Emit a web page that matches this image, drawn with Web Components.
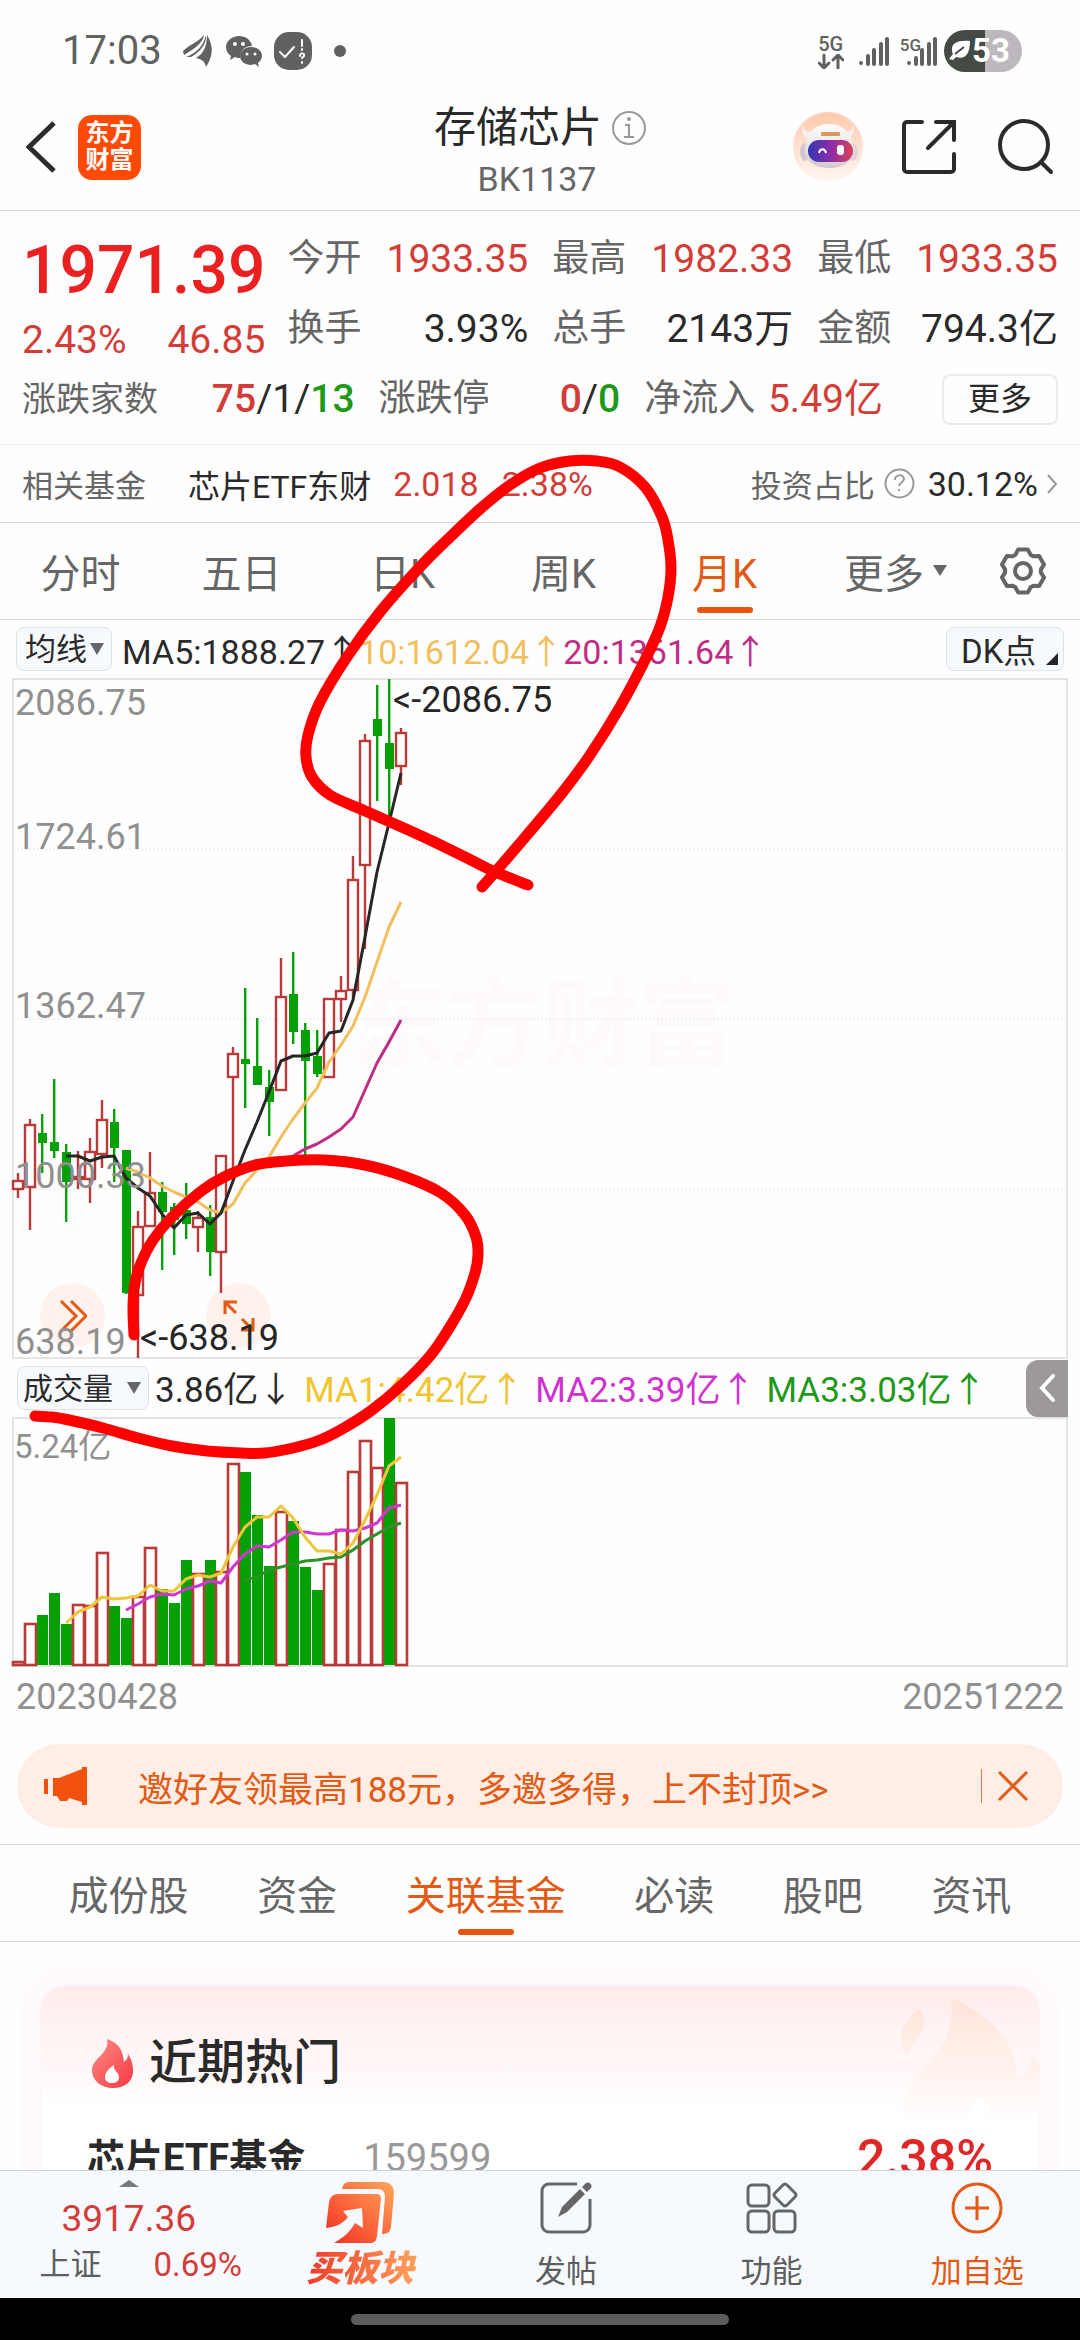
<!DOCTYPE html>
<html lang="zh-CN">
<head>
<meta charset="utf-8">
<meta name="viewport" content="width=device-width, initial-scale=1">
<title>存储芯片 BK1137</title>
<style>
  html, body { margin: 0; height: 100%; background: #fefefe; }
  body {
    font-family: Roboto, "Noto Sans CJK SC", sans-serif;
    color: #2a2a2a;
    --muted: #666666;
    --faint: #909090;
    --up: #d43c38;
    --down: #1f991a;
    --accent: #e25a14;
    --rule: #d6d6d8;
  }
</style>
</head>
<body>
<quote-app></quote-app>

<script>
const BASE = `
  :host { display: block; box-sizing: border-box; }
  *, *::before, *::after { box-sizing: border-box; }
  button, select { font: inherit; color: inherit; background: none; border: 0; padding: 0; margin: 0; appearance: none; cursor: pointer; }
  svg { display: block; flex: none; }
  p, h1, h2, dl, dd, dt { margin: 0; font-weight: 400; }
  a { color: inherit; text-decoration: none; }
  .up { color: var(--up); }
  .down { color: var(--down); }
`;

function define(name, css, html, after) {
  const tpl = document.createElement('template');
  tpl.innerHTML = `<style>${BASE}${css}</style>${html}`;
  customElements.define(name, class extends HTMLElement {
    constructor() {
      super();
      this.attachShadow({ mode: 'open' }).appendChild(tpl.content.cloneNode(true));
      if (after) after(this.shadowRoot);
    }
  });
}

/* Smooth path through a list of points (Catmull-Rom to Bezier). */
function smooth(pts) {
  let d = `M${pts[0][0]} ${pts[0][1]}`;
  for (let i = 0; i < pts.length - 1; i++) {
    const a = pts[i - 1] || pts[i], b = pts[i], c = pts[i + 1], e = pts[i + 2] || c;
    d += `C${b[0] + (c[0] - a[0]) / 6} ${b[1] + (c[1] - a[1]) / 6} ${c[0] - (e[0] - b[0]) / 6} ${c[1] - (e[1] - b[1]) / 6} ${c[0]} ${c[1]}`;
  }
  return d;
}

/* ---------- status bar ---------- */
define('status-bar', `
  :host { display: flex; align-items: center; height: 84px; padding: 18px 58px 0 62px; color: #5f625f; }
  time { font-size: 40px; line-height: 48px; margin-right: 20px; }
  .icons { display: flex; align-items: center; gap: 12px; flex: 1; }
  .net { display: flex; flex-direction: column; align-items: center; font-size: 20px; line-height: 20px; font-weight: 500; margin-right: 15px; }
  .sig { display: flex; align-items: flex-start; font-size: 17px; line-height: 18px; font-weight: 500; margin: 0 7px 0 11px; }
  .sig svg { margin-left: -14px; }
  .bat { display: flex; align-items: center; width: 78px; height: 42px; padding-left: 4px; border-radius: 21px; background: linear-gradient(90deg, #454a45 52%, #bdb8bd 52%); color: #fff; font-size: 33px; line-height: 42px; font-weight: 700; }
`, `
  <time>17:03</time>
  <span class="icons">
    <svg width="32" height="34" viewBox="0 0 32 34" fill="#5f625f"><path d="M1 17C8 10 15 9 22 1c-1 8-10 14-20 20z"/><path d="M4 23c10-4 17-10 20-22 1 9-6 17-15 22z"/><path d="M14 24c7-4 11-11 11-23 6 10 7 20-1 32-1-6-5-8-10-9z"/></svg>
    <svg width="36" height="32" viewBox="0 0 36 32"><path fill="#5f625f" d="M13 1C6 1 0 6 0 12c0 4 2 7 5 9l-1 4 5-3c2 1 4 1 5 1 0-8 5-12 12-12C25 5 20 1 13 1z"/><path fill="#5f625f" d="M25 12c-6 0-11 4-11 9s5 9 11 9l4-1 4 3-1-4c2-2 4-4 4-7 0-5-5-9-11-9z"/><g fill="#fefefe"><circle cx="9" cy="9" r="2"/><circle cx="17" cy="9" r="2"/><circle cx="21" cy="19" r="1.500"/><circle cx="29" cy="19" r="1.500"/></g></svg>
    <svg width="38" height="38" viewBox="0 0 38 38"><rect width="38" height="38" rx="15" fill="#5f625f"/><g fill="none" stroke="#fff" stroke-width="2" stroke-linecap="round"><path d="M6 20l5 5 9-10M28 8v6M28 17v1M26 24c0-4 5-3 4 0l-2 2M28 30v1"/></g></svg>
    <svg width="38" height="14" viewBox="0 0 38 14"><circle cx="16" cy="7" r="6" fill="#5f625f"/></svg>
  </span>
  <span class="net">5G<svg width="26" height="15" viewBox="0 0 26 15" fill="none" stroke="#5f625f" stroke-width="3" stroke-linecap="round" stroke-linejoin="round"><path d="M6 1v12M1 9l5 5 5-5M20 14V2M15 6l5-5 5 5"/></svg></span>
  <svg width="30" height="30" viewBox="0 0 30 30" stroke="#5f625f" stroke-width="4" stroke-linecap="round"><path d="M2 27v0M9 20v8M15 14v14M22 8v20M28 3v25"/></svg>
  <span class="sig">5G<svg width="30" height="30" viewBox="0 0 30 30" stroke="#5f625f" stroke-width="4" stroke-linecap="round"><path d="M2 27v0M9 22v6M15 14v14M22 8v20M28 3v25"/></svg></span>
  <span class="bat"><svg width="24" height="22" viewBox="0 0 24 22"><path fill="#fff" d="M22 1C10 0 4 3 4 9c0 2 0 3 1 5l-4 5 4 1 3-3c9 3 14-3 14-16z"/><path d="M7 14l9-7" stroke="#454a45" stroke-width="2"/></svg>53</span>
`);

/* ---------- page header ---------- */
define('page-header', `
  :host { display: grid; grid-template-columns: 1fr auto 1fr; align-items: center; height: 127px; padding: 0 26px; border-bottom: 1px solid var(--rule); }
  .left { display: flex; align-items: center; gap: 20px; }
  .logo { display: grid; place-content: center; width: 63px; height: 65px; border-radius: 14px; background: #ff4a06; color: #fff; font-size: 24px; line-height: 27px; font-weight: 700; text-align: center; }
  .mid { text-align: center; padding-top: 12px; }
  h1 { display: flex; align-items: center; gap: 10px; font-size: 42px; line-height: 52px; }
  .mid p { font-size: 34px; line-height: 50px; color: var(--muted); padding-right: 6px; }
  .right { display: flex; align-items: center; justify-content: flex-end; gap: 39px; }
  .right button:last-child { margin-left: 3px; }
`, `
  <div class="left">
    <button aria-label="返回"><svg width="32" height="52" viewBox="0 0 32 52" fill="none" stroke="#2b2b2b" stroke-width="5"><path d="M28 2L3 26l25 24"/></svg></button>
    <a class="logo" href="#">东方<br>财富</a>
  </div>
  <div class="mid">
    <h1>存储芯片<svg width="34" height="34" viewBox="0 0 34 34" fill="none" stroke="#999" stroke-width="2"><circle cx="17" cy="17" r="16"/><path d="M13 14h4v12M12 26h10" /><circle cx="17" cy="8" r="1" fill="#999"/></svg></h1>
    <p>BK1137</p>
  </div>
  <div class="right">
    <button aria-label="助手"><svg width="70" height="70" viewBox="0 0 70 70">
      <defs>
        <linearGradient id="av" x1="0" y1="0" x2="0" y2="1"><stop offset="0" stop-color="#ffc9ab"/><stop offset="1" stop-color="#fff7f3"/></linearGradient>
        <linearGradient id="vis" x1="0" y1="0" x2="1" y2="0"><stop offset="0" stop-color="#3436b4"/><stop offset=".5" stop-color="#8a2ea8"/><stop offset="1" stop-color="#dc4058"/></linearGradient>
        <linearGradient id="hd" x1="0" y1="0" x2="0" y2="1"><stop offset="0" stop-color="#fff"/><stop offset="1" stop-color="#d2c9cd"/></linearGradient>
      </defs>
      <circle cx="35" cy="35" r="35" fill="url(#av)"/>
      <path d="M9 14c0 6 1 9 4 12l6-5c-5-1-8-3-10-7zM61 14c0 6-1 9-4 12l-6-5c5-1 8-3 10-7z" fill="#f6eef0"/>
      <ellipse cx="12" cy="40" rx="5" ry="9" fill="#cfc8ce"/><ellipse cx="60" cy="40" rx="5" ry="9" fill="#ded4d8"/>
      <path d="M36 12c16 0 24 12 25 26 0 12-12 18-25 18S12 50 12 38c0-14 8-26 24-26z" fill="url(#hd)"/>
      <rect x="28" y="20" width="19" height="4" rx="1" fill="#d99a5c"/>
      <rect x="15" y="28" width="45" height="22" rx="11" fill="url(#vis)"/>
      <path d="M26 41c1-5 6-5 7 0" fill="none" stroke="#fff" stroke-width="2"/><rect x="44" y="33" width="7" height="10" rx="3" fill="#fff"/>
    </svg></button>
    <button aria-label="分享"><svg width="54" height="54" viewBox="0 0 54 54" fill="none" stroke="#2b2b2b" stroke-width="4" stroke-linecap="round"><path d="M20 2H5a3 3 0 0 0-3 3v44a3 3 0 0 0 3 3h44a3 3 0 0 0 3-3V34M34 2h18v18M51 3L26 28"/></svg></button>
    <button aria-label="搜索"><svg width="56" height="56" viewBox="0 0 56 56" fill="none" stroke="#2b2b2b" stroke-width="4" stroke-linecap="round"><circle cx="26" cy="26" r="24"/><path d="M43 43l10 10"/></svg></button>
  </div>
`);

/* ---------- quote figures ---------- */
define('quote-item', `
  :host { display: flex; justify-content: space-between; align-items: center; font-size: 39px; line-height: 70px; white-space: nowrap; }
  .k { font-size: 37px; color: var(--muted); }
  :host([small]) .k { font-size: 34px; }
`, `<span class="k"><slot name="k"></slot></span><span><slot></slot></span>`);

define('quote-panel', `
  :host { padding: 13px 22px 10px; border-bottom: 1px solid #eeeeee; }
  .top { display: grid; grid-template-columns: auto 1fr; column-gap: 22px; }
  .price { font-size: 66px; line-height: 94px; font-weight: 500; color: #eb2020; white-space: nowrap; }
  .chg { display: flex; justify-content: space-between; font-size: 39px; line-height: 44px; }
  .grid { display: grid; grid-template-columns: repeat(3, 1fr); column-gap: 24px; }
  .row { display: grid; grid-template-columns: 333fr 242fr 239fr auto; column-gap: 24px; align-items: center; }
  b { font-weight: 500; }
  .more { margin-left: 35px; width: 116px; height: 51px; border: 2px solid #ececee; border-radius: 8px; font-size: 32px; line-height: 46px; }
`, `
  <div class="top">
    <div>
      <p class="price">1971.39</p>
      <p class="chg up"><span>2.43%</span><span>46.85</span></p>
    </div>
    <div class="grid">
      <quote-item><span slot="k">今开</span><span class="up">1933.35</span></quote-item>
      <quote-item><span slot="k">最高</span><span class="up">1982.33</span></quote-item>
      <quote-item><span slot="k">最低</span><span class="up">1933.35</span></quote-item>
      <quote-item><span slot="k">换手</span>3.93%</quote-item>
      <quote-item><span slot="k">总手</span>2143万</quote-item>
      <quote-item><span slot="k">金额</span>794.3亿</quote-item>
    </div>
  </div>
  <div class="row">
    <quote-item small><span slot="k">涨跌家数</span><b class="up">75</b>/1/<b class="down">13</b></quote-item>
    <quote-item><span slot="k">涨跌停</span><b class="up">0</b>/<b class="down">0</b></quote-item>
    <quote-item><span slot="k">净流入</span><span class="up">5.49亿</span></quote-item>
    <button class="more">更多</button>
  </div>
`);

/* ---------- related fund ---------- */
define('fund-strip', `
  :host { display: flex; align-items: center; height: 78px; padding: 0 22px; border-bottom: 1px solid var(--rule); font-size: 32px; white-space: nowrap; }
  .k { color: var(--muted); font-size: 31px; }
  .name { margin-left: 42px; margin-right: 22px; }
  .n { font-size: 34px; margin-right: 23px; }
  a { display: flex; align-items: center; margin-left: auto; gap: 9px; }
  a .v { font-size: 34px; margin-left: 4px; }
`, `
  <span class="k">相关基金</span><span class="name">芯片ETF东财</span>
  <span class="n up">2.018</span><span class="n up">2.38%</span>
  <a href="#"><span class="k">投资占比</span>
    <svg width="31" height="31" viewBox="0 0 31 31" fill="none" stroke="#999" stroke-width="2"><circle cx="15.500" cy="15.500" r="14"/><path d="M11 12c0-6 9-6 9-1 0 3-5 4-5 7M15 21v2"/></svg>
    <span class="v">30.12%</span>
    <svg width="11" height="20" viewBox="0 0 11 20" fill="none" stroke="#999" stroke-width="2"><path d="M1 1l8 9-8 9"/></svg></a>
`);

/* ---------- period tabs ---------- */
define('period-tabs', `
  :host { display: grid; grid-template-columns: repeat(6, 161fr) 114fr; height: 97px; border-bottom: 1px solid var(--rule); color: var(--muted); font-size: 40px; }
  button { position: relative; display: flex; align-items: center; justify-content: center; white-space: nowrap; }
  .on { color: var(--accent); }
  .on::after { content: ""; position: absolute; left: calc(50% - 28px); bottom: 6px; width: 56px; height: 6px; border-radius: 3px; background: #e9540d; }
  .more { padding-left: 20px; gap: 9px; }
`, `
  <button>分时</button><button>五日</button><button>日K</button><button>周K</button><button class="on">月K</button>
  <button class="more">更多<svg width="14" height="12" viewBox="0 0 14 12"><path d="M0 0h14L7 11z" fill="#666"/></svg></button>
  <button class="gear" aria-label="设置"><svg width="50" height="50" viewBox="-25 -25 50 50" fill="none" stroke="#666" stroke-width="4" stroke-linejoin="round"><path/><circle r="8"/></svg></button>
`, root => {
  let d = '';
  for (let i = 0; i < 6; i++) {
    [[-25, 18], [-13, 22], [13, 22], [25, 18]].forEach(([a, r]) => {
      const t = (i * 60 - 90 + a) * Math.PI / 180;
      d += (d ? 'L' : 'M') + (r * Math.cos(t)).toFixed(1) + ' ' + (r * Math.sin(t)).toFixed(1);
    });
  }
  root.querySelector('.gear path').setAttribute('d', d + 'Z');
});

/* ---------- K-line chart ---------- */
/* [rising, high, body top, body bottom, low, volume top] */
const BARS = [
  [1,1173,1181,1189,1198,1662],[1,1119,1125,1187,1230,1624],[0,1114,1133,1143,1173,1615],[0,1079,1142,1151,1158,1593],
  [0,1144,1152,1182,1222,1624],[1,1151,1177,1179,1189,1605],[1,1138,1152,1179,1203,1606],[1,1100,1120,1154,1168,1553],
  [0,1109,1122,1148,1182,1606],[0,1150,1150,1293,1294,1618],[1,1211,1227,1295,1358,1597],[1,1152,1193,1226,1227,1548],
  [0,1182,1192,1212,1270,1589],[0,1203,1207,1220,1255,1603],[0,1183,1210,1224,1239,1560],[1,1211,1218,1227,1252,1574],
  [0,1205,1217,1252,1276,1560],[1,1156,1156,1252,1293,1572],[1,1047,1054,1077,1170,1464],[0,988,1059,1064,1108,1472],
  [0,1018,1066,1085,1085,1515],[0,1070,1087,1102,1136,1566],[1,958,997,1090,1091,1512],[0,952,994,1032,1044,1521],
  [0,1023,1030,1061,1157,1567],[0,1030,1056,1074,1077,1590],[1,999,999,1077,1077,1564],[1,976,991,999,1022,1530],
  [1,856,880,990,997,1472],[1,734,741,865,949,1441],[0,685,719,736,801,1468],[0,679,743,769,817,1418],[1,728,733,766,785,1483]
];
const VOL_UP = { 30: 1 };
const K_LINES = [
  ['#f3bf5c', 9, [1168,1172,1178,1186,1192,1197,1202,1210,1213,1204,1183,1170,1157,1137,1119,1103,1088,1062,1045,1026,997,962,927,902]],
  ['#c02b84', 22, [1162,1156,1149,1144,1137,1129,1117,1090,1063,1042,1020]],
  ['#262626', 4, [1156,1156,1161,1157,1156,1178,1188,1196,1214,1228,1215,1213,1224,1213,1181,1150,1122,1092,1061,1056,1056,1053,1033,1031,1000,937,872,823,773]]
];
const V_LINES = [
  ['#2d9128', 19, [1580,1577,1570,1567,1564,1561,1560,1558,1557,1550,1541,1534,1527,1523]],
  ['#cf38cf', 9, [1610,1604,1597,1594,1595,1589,1586,1581,1583,1567,1554,1546,1547,1540,1532,1532,1534,1534,1530,1531,1528,1523,1508,1505]],
  ['#edc63a', 4, [1623,1612,1607,1597,1599,1598,1596,1585,1591,1591,1579,1575,1577,1573,1547,1527,1517,1517,1506,1518,1537,1551,1551,1554,1543,1520,1495,1466,1457]]
];
const cx = i => 18 + 12 * i - (i > 16 ? 1 : 0);
const lines = set => set.map(([c, s, ys]) =>
  `<polyline fill="none" stroke="${c}" stroke-width="3" stroke-linejoin="round" points="${ys.map((y, k) => cx(s + k) + ',' + y).join(' ')}"/>`).join('');

function candles() {
  return BARS.map(([up, h, t, b, l], i) => {
    const x = cx(i);
    return up
      ? `<g fill="none" stroke="#b93a38" stroke-width="2.400"><path d="M${x} ${h}V${t}M${x} ${b}V${l}"/><rect x="${x - 5}" y="${t}" width="10" height="${b - t}"/></g>`
      : `<g fill="#04a004"><rect x="${x - 1}" y="${h}" width="2.400" height="${l - h}"/><rect x="${x - 4}" y="${t}" width="9" height="${b - t}"/></g>`;
  }).join('');
}
function volumes() {
  return BARS.map(([up, , , , , v], i) => {
    const x = cx(i);
    return (up || VOL_UP[i])
      ? `<rect x="${x - 5}" y="${v}" width="11" height="${1665 - v}" fill="#fefefe" stroke="#b93a38" stroke-width="2.600"/>`
      : `<rect x="${x - 5}" y="${v}" width="11" height="${1665 - v}" fill="#04a004"/>`;
  }).join('');
}

define('k-chart', `
  .legend { display: flex; align-items: center; height: 58px; padding: 0 16px; font-size: 34px; white-space: nowrap; }
  .pick { display: flex; align-items: center; height: 44px; border: 1px solid #e0e2e6; border-radius: 8px; background: #f6faff; }
  .ma label.pick { width: 96px; padding-left: 8px; gap: 3px; font-size: 31px; }
  .ma .txt { margin-left: 10px; display: flex; }
  .dk { position: relative; margin-left: auto; width: 118px; padding-left: 14px; font-size: 33px; }
  .dk svg { position: absolute; right: 5px; bottom: 5px; }
  .k10 { color: #f3bf5c; } .k20 { color: #c02b84; }
  .stage { position: relative; }
  svg.plot { width: 100%; height: auto; }
  .stage svg.plot { position: relative; pointer-events: none; }
  .float { position: absolute; bottom: 11px; width: 65px; height: 65px; border-radius: 50%; background: #fff1ec; display: grid; place-items: center; }
  .f1 { left: 40px; } .f2 { left: 206px; }
  .vol { padding: 0 12px 0 17px; font-size: 35px; }
  .vol .pick { width: 132px; padding-left: 5px; gap: 14px; font-size: 30px; }
  .vol .txt { margin-left: 6px; display: flex; gap: 11px; padding-bottom: 4px; }
  .m1 { color: #f2c530; } .m2 { color: #d032d0; } .m3 { color: #1f991a; }
  .fold { margin-left: auto; width: 42px; height: 57px; border-radius: 12px 0 0 12px; background: #9c989c; display: grid; place-items: center; }
  .dates { display: flex; justify-content: space-between; padding: 0 16px; font-size: 36px; line-height: 60px; color: var(--faint); }
  text { font-size: 36px; fill: var(--faint); }
  text.tag { fill: #262626; }
  text.v { font-size: 33px; }
  text.wm { font-size: 96px; font-weight: 700; fill: #fefafc; }
`, `
  <div class="legend ma">
    <label class="pick"><select aria-label="指标"><option>均线</option></select><svg width="14" height="13" viewBox="0 0 14 13"><path d="M0 0h14L7 12z" fill="#666"/></svg></label>
    <span class="txt"><span>MA5:1888.27↑</span><span class="k10">10:1612.04↑</span><span class="k20">20:1361.64↑</span></span>
    <button class="pick dk">DK点<svg width="12" height="12" viewBox="0 0 12 12"><path d="M12 0v12H0z" fill="#262626"/></svg></button>
  </div>
  <div class="stage">
    <button class="float f1" aria-label="快进"><svg width="28" height="32" viewBox="0 0 28 32" fill="none" stroke="#e25a14" stroke-width="3"><path d="M2 1l15 15L2 31M12 1l15 15-15 15"/></svg></button>
    <button class="float f2" aria-label="全屏"><svg width="32" height="32" viewBox="0 0 32 32" fill="none" stroke="#e25a14" stroke-width="3"><path d="M2 14V2h12M2 2l11 11M30 18v12H18M30 30L19 19"/></svg></button>
    <svg class="plot" viewBox="0 678 1080 681">
      <text class="wm" x="350" y="1058">东方财富</text>
      <path d="M13 849H1067M13 1019H1067M13 1189H1067" stroke="#e4e4e4" stroke-width="1" stroke-dasharray="2 2"/>
      <rect x="13" y="679" width="1054" height="679" fill="none" stroke="#e4e4e4" stroke-width="2"/>
      ${candles()}${lines(K_LINES)}
      <text x="15" y="715">2086.75</text><text x="15" y="849">1724.61</text><text x="15" y="1018">1362.47</text>
      <text x="15" y="1188">1000.33</text><text x="15" y="1354">638.19</text>
      <text class="tag" x="393" y="712">&lt;-2086.75</text><text class="tag" x="140" y="1350">&lt;-638.19</text>
    </svg>
  </div>
  <div class="legend vol">
    <label class="pick"><select aria-label="副图"><option>成交量</option></select><svg width="14" height="12" viewBox="0 0 14 12"><path d="M0 0h14L7 12z" fill="#666"/></svg></label>
    <span class="txt"><span>3.86亿↓</span><span class="m1">MA1:4.42亿↑</span><span class="m2">MA2:3.39亿↑</span><span class="m3">MA3:3.03亿↑</span></span>
    <button class="fold" aria-label="展开"><svg width="16" height="28" viewBox="0 0 16 28" fill="none" stroke="#fff" stroke-width="4" stroke-linecap="round"><path d="M14 2L3 14l11 12"/></svg></button>
  </div>
  <svg class="plot" viewBox="0 1417 1080 250">
    <rect x="13" y="1418" width="1054" height="248" fill="none" stroke="#e4e4e4" stroke-width="2"/>
    <text class="v" x="14" y="1458">5.24亿</text>
    ${volumes()}${lines(V_LINES)}
  </svg>
  <div class="dates"><span>20230428</span><span>20251222</span></div>
`);

/* ---------- promo banner ---------- */
define('promo-banner', `
  :host { display: flex; align-items: center; height: 84px; margin: 17px 17px 16px; padding: 0 34px 0 27px; border-radius: 42px; background: #ffeee6; color: var(--accent); font-size: 35px; white-space: nowrap; }
  a { flex: 1; margin-left: 51px; }
  button { display: flex; align-items: center; gap: 15px; }
  button::before { content: ""; width: 1px; height: 34px; background: #dd7a48; }
`, `
  <svg width="43" height="38" viewBox="0 0 43 38" fill="#f0510c"><path d="M0 12h4v15H0zM9 11h6L38 2V0h5v38h-5v-3l-13-4-2 3h-7l-3-5H9z"/></svg>
  <a href="#">邀好友领最高188元，多邀多得，上不封顶&gt;&gt;</a>
  <button aria-label="关闭"><svg width="32" height="32" viewBox="0 0 32 32" fill="none" stroke="#e25a14" stroke-width="3"><path d="M2 2l28 28M30 2L2 30"/></svg></button>
`);

/* ---------- section tabs ---------- */
define('section-tabs', `
  :host { display: flex; justify-content: space-evenly; height: 98px; border-top: 1px solid var(--rule); border-bottom: 1px solid var(--rule); color: var(--muted); font-size: 40px; }
  button { position: relative; white-space: nowrap; }
  .on { color: var(--accent); }
  .on::after { content: ""; position: absolute; left: calc(50% - 28px); bottom: 6px; width: 56px; height: 6px; border-radius: 3px; background: #e9540d; }
`, `<button>成份股</button><button>资金</button><button class="on">关联基金</button><button>必读</button><button>股吧</button><button>资讯</button>`);

/* ---------- hot funds card ---------- */
define('hot-card', `
  :host { padding: 44px 41px 0; }
  .card { position: relative; height: 300px; padding: 45px 46px 0; border-radius: 24px; background: linear-gradient(#ffebea, #fff3f4 45px, #fff8f8 85px, #fff 125px); box-shadow: 0 0 0 2px #fbf6f8, 0 0 0 20px #fffbfd; }
  .bg { position: absolute; right: 0; top: 12px; }
  h2 { display: flex; align-items: center; gap: 16px; margin-left: 5px; font-size: 48px; line-height: 64px; font-weight: 500; }
  .row { display: flex; align-items: center; margin-top: 31px; font-size: 38px; line-height: 64px; }
  .name { font-weight: 700; }
  .code { margin-left: 58px; color: #999; }
  .pct { margin-left: auto; font-size: 50px; font-weight: 500; color: #e02626; }
`, `
  <div class="card">
    <svg class="bg" width="142" height="120" viewBox="0 0 142 120"><defs><linearGradient id="fl" x1="0" y1="0" x2="0" y2="1"><stop offset="0" stop-color="#ffe3d8"/><stop offset="1" stop-color="#fffdfd"/></linearGradient></defs><path fill="url(#fl)" d="M22 10c14 20-4 28-12 48C-2 38 4 28 22 10zM54 0c34 14 62 40 64 68 0 6 2 8 6 12 8-6 10-14 10-24l8 8v56H90c-2-8 0-16-4-22-10 6-14 14-14 22H6c-4-50 56-56 48-120z"/></svg>
    <h2><svg width="41" height="49" viewBox="0 0 41 49"><defs><linearGradient id="fi" x1="0" y1="0" x2="1" y2="1"><stop offset="0" stop-color="#ff8c86"/><stop offset="1" stop-color="#f53844"/></linearGradient></defs><path fill="url(#fi)" d="M15 0c14 5 16 14 17 23 3-2 4-5 4-8 4 6 5 12 5 17 0 11-9 17-20 17S0 42 0 31C0 19 18 15 15 0z"/><path fill="#fff" d="M22 26c-6 4-9 8-9 12 0 4 3 6 7 6s7-2 7-6c0-5-6-6-5-12z"/></svg>近期热门</h2>
    <div class="row"><span class="name">芯片ETF基金</span><span class="code">159599</span><span class="pct">2.38%</span></div>
  </div>
`);

/* ---------- bottom bar ---------- */
define('bottom-nav', `
  :host { display: block; }
  nav { display: flex; height: 128px; border-top: 1px solid #d2d5dc; background: #f6faff; color: #5e5e5e; font-size: 31px; }
  nav > * { flex: 206; display: flex; flex-direction: column; align-items: center; padding-top: 11px; }
  .idx { flex: 258; padding-top: 9px; }
  .idx b { font-weight: 400; font-size: 37px; line-height: 46px; margin-top: 9px; }
  .idx > span { display: flex; gap: 52px; padding-left: 24px; line-height: 46px; }
  .idx i { font-style: normal; font-size: 33px; }
  nav button > span { line-height: 60px; margin-top: 8px; }
  nav .idx > span { line-height: 46px; margin-top: 0; }
  nav .buy span { font-size: 36px; line-height: 50px; margin-top: 1px; padding: 0 6px; font-weight: 900; font-style: italic; background: linear-gradient(90deg, #ee3426, #ffa35c); -webkit-background-clip: text; background-clip: text; color: transparent; }
  .add { color: var(--accent); }
  .home { display: grid; place-items: center; height: 42px; background: #000; }
  .home::before { content: ""; width: 35%; height: 11px; border-radius: 6px; background: #5b5d5a; }
`, `
  <nav>
    <button class="idx"><svg width="20" height="7" viewBox="0 0 20 7"><path d="M0 7L10 0l10 7z" fill="#777"/></svg><b class="up">3917.36</b><span>上证<i class="up">0.69%</i></span></button>
    <button class="buy"><svg width="68" height="61" viewBox="0 0 68 61"><defs><linearGradient id="g" x1="1" y1="0" x2="0" y2="1"><stop offset="0" stop-color="#ffa85c"/><stop offset=".5" stop-color="#fd6a3c"/><stop offset="1" stop-color="#ef2c24"/></linearGradient></defs><path fill="url(#g)" d="M16 7c1-5 3-7 8-7h33c7 0 11 4 11 11l-3 34c-1 5-3 7-9 7l3-37c0-5-2-8-8-8zM12 12h38c4 0 5 2 5 5l-4 37c-1 5-2 7-7 7H8c10-6 16-11 21-20l8 5-1-20-19 3 5 6C18 41 10 45 0 46l3-26c1-5 4-8 9-8z"/></svg><span>买板块</span></button>
    <button><svg width="52" height="52" viewBox="0 0 52 52"><path d="M37 2H9a7 7 0 0 0-7 7v34a7 7 0 0 0 7 7h34a7 7 0 0 0 7-7V17" fill="none" stroke="#666" stroke-width="3"/><path d="M18 35l4-10L40 7l5 5-18 18zM42 5l4-4c3-2 7 2 5 5l-4 4z" fill="#666"/></svg><span>发帖</span></button>
    <button><svg width="52" height="52" viewBox="0 0 52 52" fill="none" stroke="#666" stroke-width="3"><rect x="2" y="3" width="21" height="21" rx="4"/><rect x="2" y="29" width="21" height="21" rx="4"/><rect x="28" y="29" width="21" height="21" rx="4"/><path d="M37 3q2-2 4 0l8 8q2 2 0 4l-8 8q-2 2-4 0l-8-8q-2-2 0-4z"/></svg><span>功能</span></button>
    <button class="add"><svg width="52" height="52" viewBox="0 0 52 52" fill="none" stroke="#e25a14" stroke-width="3"><circle cx="26" cy="26" r="24"/><path d="M26 14v24M14 26h24"/></svg><span>加自选</span></button>
  </nav>
  <div class="home"></div>
`);

/* ---------- hand-drawn annotation ---------- */
define('ink-overlay', `
  :host { position: absolute; left: 0; top: 0; width: 100%; pointer-events: none; }
  svg { width: 100%; height: auto; }
  path { fill: none; stroke: #ff0000; stroke-width: 11; stroke-linecap: round; stroke-linejoin: round; }
`, `<svg viewBox="0 0 1080 2340"><path/><path/></svg>`, root => {
  const strokes = [
    [[482,887],[497,870],[527,835],[562,793],[590,755],[620,707],[645,660],[660,627],[668,597],[671,568],[668,540],[662,517],[645,487],[620,467],[597,461],[570,461],[540,468],[510,485],[480,509],[447,540],[417,570],[380,612],[347,657],[320,702],[308,735],[306,757],[312,777],[330,795],[363,810],[397,825],[430,840],[467,858],[493,871],[528,885]],
    [[134,1335],[133,1307],[135,1283],[141,1263],[153,1240],[172,1217],[200,1192],[224,1177],[255,1165],[286,1161],[324,1160],[365,1165],[406,1177],[441,1193],[465,1215],[476,1237],[478,1255],[475,1273],[465,1300],[448,1330],[430,1356],[403,1384],[372,1410],[344,1428],[320,1440],[293,1448],[265,1453],[241,1453],[207,1451],[172,1446],[138,1438],[103,1428],[69,1420],[52,1417],[35,1416]]
  ];
  root.querySelectorAll('path').forEach((p, i) => p.setAttribute('d', smooth(strokes[i])));
});

/* ---------- app shell ---------- */
define('quote-app', `
  :host { position: relative; display: flex; flex-direction: column; height: 100vh; overflow: hidden; }
  main { flex: 1; min-height: 0; overflow: hidden; }
`, `
  <status-bar></status-bar>
  <page-header></page-header>
  <main>
    <quote-panel></quote-panel>
    <fund-strip></fund-strip>
    <period-tabs></period-tabs>
    <k-chart></k-chart>
    <promo-banner></promo-banner>
    <section-tabs></section-tabs>
    <hot-card></hot-card>
  </main>
  <bottom-nav></bottom-nav>
  <ink-overlay></ink-overlay>
`);
</script>
</body>
</html>
